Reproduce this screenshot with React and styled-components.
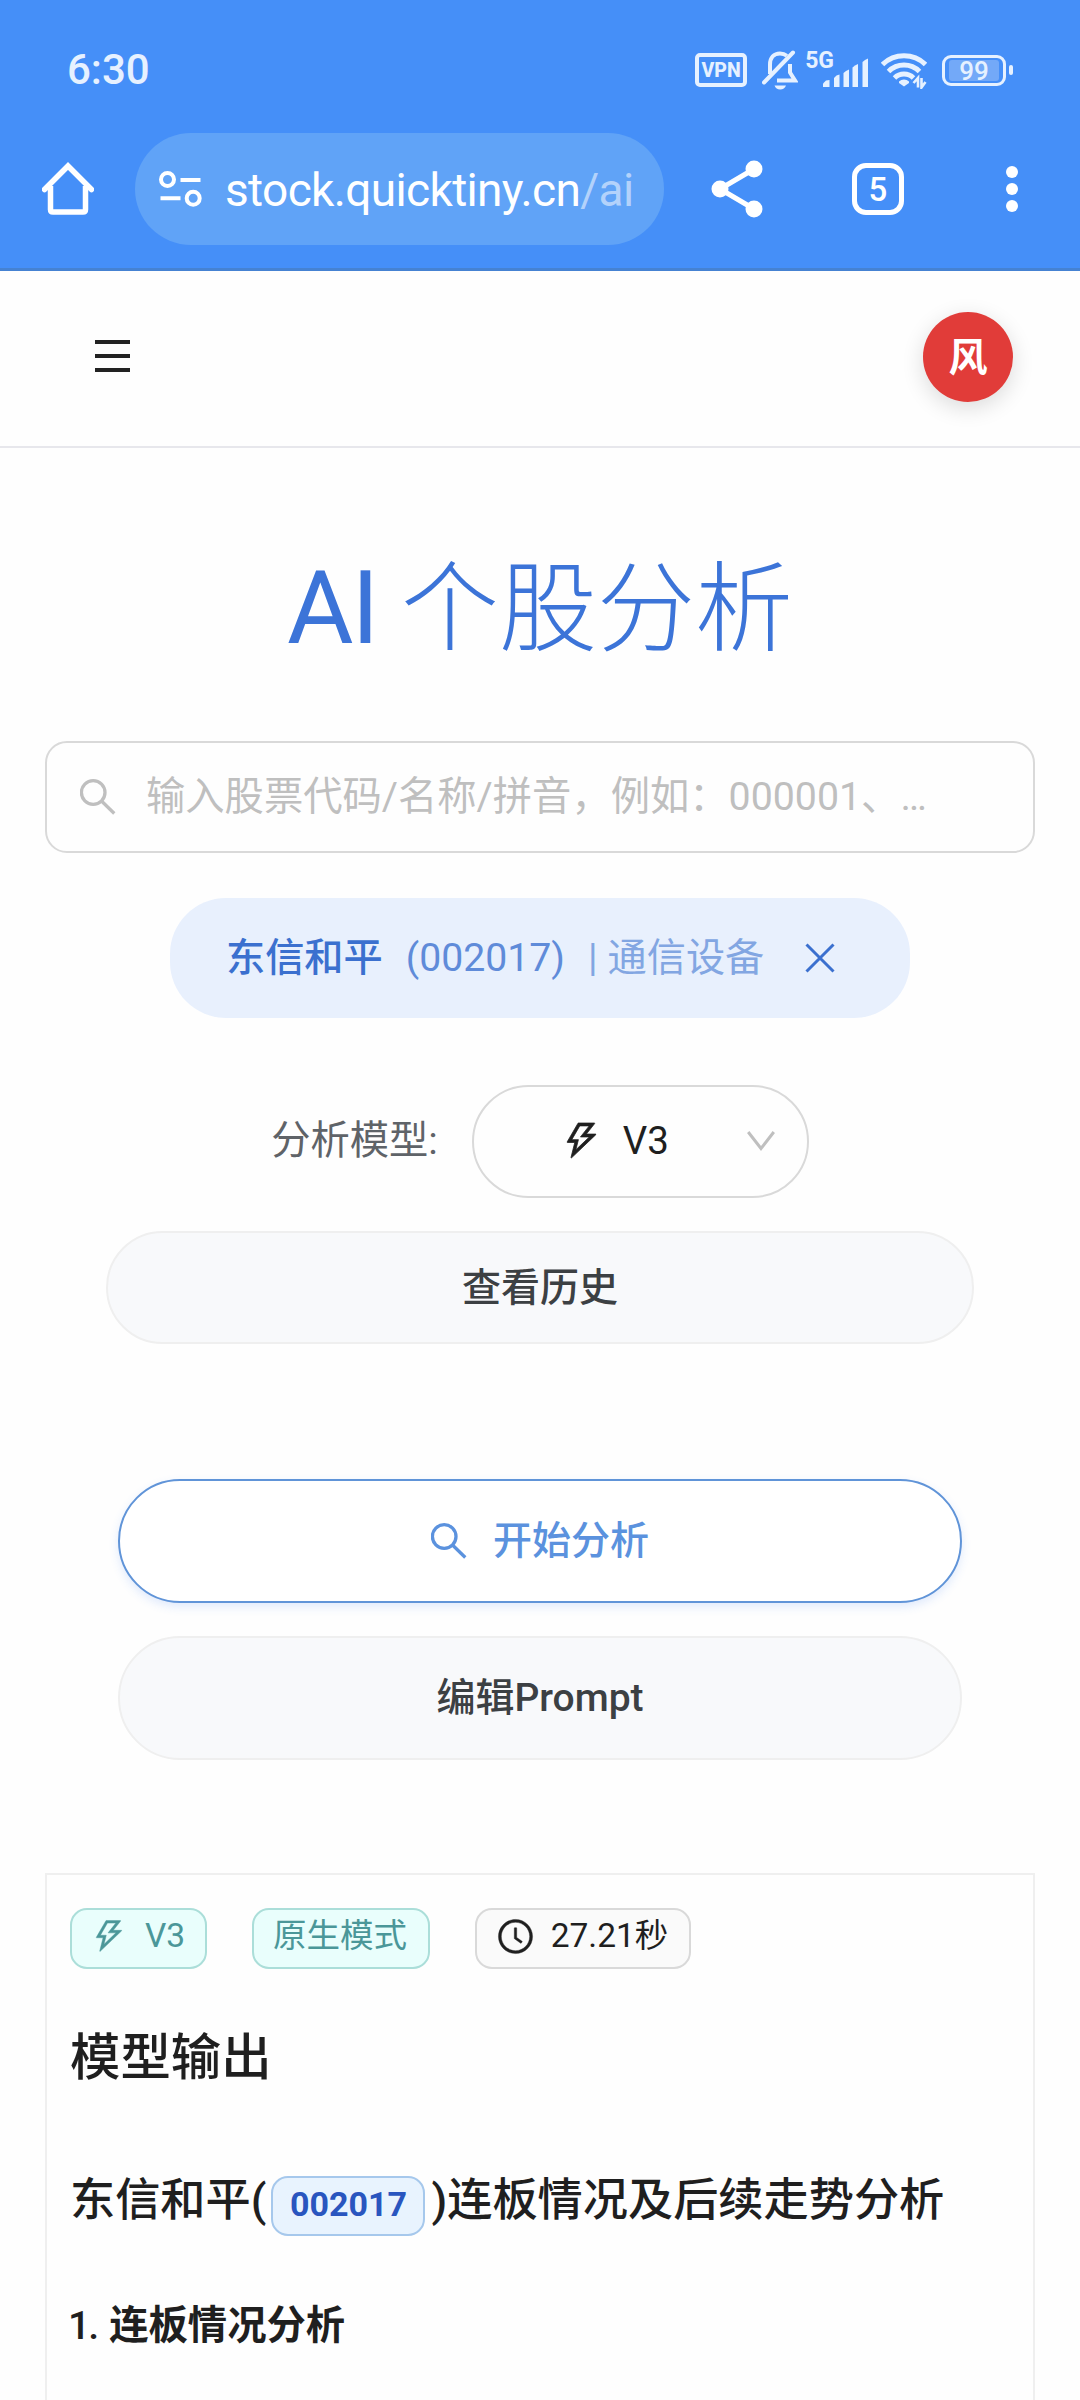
import { useState } from "react";
import styled, { createGlobalStyle } from "styled-components";
import { AiOutlineThunderbolt, AiOutlineClockCircle } from "react-icons/ai";

function App() {
  const [keyword, setKeyword] = useState("");
  return (
    <Page>
      <GlobalStyle />

      <BrowserChrome>
        <StatusBar>
          <Clock>6:30</Clock>
          <StatusIcons>
            <Vpn>VPN</Vpn>
            <BellOff />
            <Network>
              <NetworkType>5G</NetworkType>
              <SignalBars />
            </Network>
            <Wifi />
            <Battery>
              <BatteryBody>
                <BatteryLevel>99</BatteryLevel>
              </BatteryBody>
              <BatteryTip />
            </Battery>
          </StatusIcons>
        </StatusBar>
        <Toolbar>
          <HomeIcon />
          <UrlBar>
            <TuneIcon />
            <Url>
              stock.quicktiny.cn<UrlPath>/ai</UrlPath>
            </Url>
          </UrlBar>
          <ShareIcon />
          <TabCount>5</TabCount>
          <MoreIcon />
        </Toolbar>
      </BrowserChrome>

      <AppBar>
        <MenuButton>
          <i />
          <i />
          <i />
        </MenuButton>
        <Avatar>风</Avatar>
      </AppBar>

      <Main>
        <Title>
          <TitleLatin>AI</TitleLatin> 个股分析
        </Title>

        <SearchBox>
          <SearchIcon />
          <SearchInput
            value={keyword}
            onChange={(e) => setKeyword(e.target.value)}
            placeholder="输入股票代码/名称/拼音，例如：000001、600000"
          />
        </SearchBox>

        <StockPill>
          <StockName>东信和平</StockName>
          <StockCode>(002017)</StockCode>
          <StockIndustry>
            <Bar>|</Bar>通信设备
          </StockIndustry>
          <CloseIcon />
        </StockPill>

        <ModelRow>
          <ModelLabel>分析模型:</ModelLabel>
          <ModelSelect>
            <ModelValue>
              <AiOutlineThunderbolt size={43} strokeWidth={18} />
              V3
            </ModelValue>
            <DownIcon />
          </ModelSelect>
        </ModelRow>

        <Button $width={868} $height={113}>查看历史</Button>

        <Actions>
          <Button $width={844} $height={124} $primary>
            <SearchIcon />
            开始分析
          </Button>
          <Button $width={844} $height={124}>编辑Prompt</Button>
        </Actions>

        <ResultCard>
          <Tags>
            <Tag $width={137} $teal $gap={17}>
              <AiOutlineThunderbolt size={38} strokeWidth={12} />
              V3
            </Tag>
            <Tag $width={178} $teal>原生模式</Tag>
            <Tag $width={216} $gap={16}>
              <AiOutlineClockCircle size={39} strokeWidth={10} />
              27.21秒
            </Tag>
          </Tags>
          <OutputTitle>模型输出</OutputTitle>
          <Heading>
            东信和平(<Code>002017</Code>)连板情况及后续走势分析
          </Heading>
          <Section>
            <SectionNo>1.</SectionNo>连板情况分析
          </Section>
        </ResultCard>
      </Main>
    </Page>
  );
}

export default App;

/* --- icons --- */

const BellOff = () => (
  <svg width="36" height="40" viewBox="0 0 36 40" fill="none" stroke="#e6f1ff" strokeWidth="4">
    <path d="M8 24V14.500C8 7.500 12 3.500 18 3.500c2.800 0 5 .8 6.800 2.300" />
    <path d="M28 14v8.500l5 8H15" />
    <path d="M2 32.500 31 2.500" strokeLinecap="round" strokeWidth="4" />
    <path d="M12.500 35.500h11.500c-1 2.500-3 4-5.800 4s-4.700-1.500-5.700-4z" fill="#e6f1ff" stroke="none" />
  </svg>
);

const SignalBars = () => (
  <svg width="46" height="30" viewBox="0 0 46 30" fill="#e6f1ff">
    <path d="M0 29v-3.500l3-3 3.500-.5v7z" />
    <path d="M11 29V20l2.500-2.500 3-1V29z" />
    <path d="M20.500 29V15l2.500-2 3-1.500V29z" />
    <path d="M29.500 29V9.500l2.500-2 3-1.500V29z" />
    <path d="M39.500 29V4l2.500-2 3-1.500V29z" />
  </svg>
);

const Wifi = () => (
  <svg width="46" height="38" viewBox="0 0 46 38" fill="none" stroke="#e6f1ff" strokeWidth="5">
    <path d="M1.500 13.500a31 31 0 0 1 43 0" />
    <path d="M7.500 20.500a22 22 0 0 1 31 0" />
    <path d="M13.500 27a13.500 13.500 0 0 1 19 0" />
    <path d="M18 30.500a7.500 7.500 0 0 1 10 0v1.500L23 35.500 18 32z" fill="#e6f1ff" stroke="none" />
    <path d="M37 36.500V27l-4.500 5M40.500 27v9.500l4-5.500" strokeWidth="2.600" />
  </svg>
);

const HomeIcon = () => (
  <svg width="52" height="54" viewBox="0 0 52 54" fill="none" stroke="#fff" strokeWidth="5.500">
    <path d="M2.500 27.500 26 4l23.500 23.500" strokeLinecap="round" />
    <path d="M8.500 24v23.500q0 2.500 2.500 2.500h30q2.500 0 2.500-2.500V24" />
  </svg>
);

const TuneIcon = () => (
  <svg width="43" height="36" viewBox="0 0 43 36" fill="none" stroke="#fff" strokeWidth="4">
    <circle cx="8.500" cy="8.500" r="6.500" />
    <path d="M21.500 9H41.500M1.500 27.200h20" />
    <circle cx="34.200" cy="27.200" r="6.500" />
  </svg>
);

const ShareIcon = () => (
  <svg width="52" height="58" viewBox="0 0 52 58" fill="#fff">
    <path d="M43 9 9 29l34 20" fill="none" stroke="#fff" strokeWidth="5" />
    <circle cx="43" cy="9" r="8.500" />
    <circle cx="9" cy="29" r="8.500" />
    <circle cx="43" cy="49" r="8.500" />
  </svg>
);

const MoreIcon = () => (
  <svg width="12" height="46" viewBox="0 0 12 46" fill="#fff">
    <circle cx="6" cy="6" r="6" />
    <circle cx="6" cy="23" r="6" />
    <circle cx="6" cy="40" r="6" />
  </svg>
);

const SearchIcon = () => (
  <svg width="36" height="36" viewBox="0 0 36 36" fill="none" stroke="currentColor" strokeWidth="3.300">
    <circle cx="13.200" cy="13.500" r="11.800" />
    <path d="M21.500 22 34.300 34.500" />
  </svg>
);

const DownIcon = () => (
  <svg width="28" height="20" viewBox="0 0 28 20" fill="none" stroke="#bfbfbf" strokeWidth="3">
    <path d="M1.200 1 14 17.500 26.800 1" />
  </svg>
);

const CloseIcon = () => (
  <svg width="30" height="30" viewBox="0 0 30 30" fill="none" stroke="#3b70cf" strokeWidth="3">
    <path d="M1.500 1.500l27 27M28.500 1.500l-27 27" />
  </svg>
);

/* --- styled-components --- */

const GlobalStyle = createGlobalStyle`
  * {
    box-sizing: border-box;
  }
  body {
    margin: 0;
    background: #fefefe;
    font-family: Roboto, "Noto Sans CJK SC", sans-serif;
  }
  svg {
    flex-shrink: 0;
  }
`;

const Page = styled.div`
  width: 1080px;
  height: 2400px;
  overflow: hidden;
  display: flex;
  flex-direction: column;
`;

const BrowserChrome = styled.header`
  height: 271px;
  flex-shrink: 0;
  background: #458ff8;
  border-bottom: 3px solid #4582d2;
`;

const StatusBar = styled.div`
  height: 133px;
  display: flex;
  justify-content: space-between;
  align-items: center;
  padding: 7px 67px 0 67px;
  color: #e6f1ff;
`;

const Clock = styled.span`
  font-size: 42px;
  font-weight: 500;
  line-height: 50px;
`;

const StatusIcons = styled.div`
  display: flex;
  align-items: center;
  height: 40px;
`;

const Vpn = styled.span`
  width: 52px;
  height: 34px;
  margin-right: 15px;
  border: 4px solid #e6f1ff;
  border-radius: 5px;
  font-size: 19.500px;
  font-weight: 800;
  line-height: 27px;
  text-align: center;
`;

const Network = styled.div`
  height: 36px;
  margin: 0 12px 0 7px;
  display: flex;
  align-items: flex-end;
  svg {
    margin-left: -11px;
  }
`;

const NetworkType = styled.span`
  align-self: flex-start;
  font-size: 23px;
  font-weight: 700;
  line-height: 18px;
`;

const Battery = styled.div`
  display: flex;
  align-items: center;
  gap: 3px;
  margin-left: 15px;
`;

const BatteryBody = styled.div`
  width: 64px;
  height: 31px;
  padding: 2px;
  border: 3px solid #e6f1ff;
  border-radius: 9px;
`;

const BatteryLevel = styled.div`
  height: 21px;
  margin: 0 2px;
  border-radius: 3px;
  background: #73a9f8;
  font-size: 26px;
  font-weight: 500;
  line-height: 22px;
  text-align: center;
`;

const BatteryTip = styled.i`
  width: 4px;
  height: 10px;
  border-radius: 2px;
  background: #e6f1ff;
`;

const Toolbar = styled.div`
  height: 112px;
  display: flex;
  align-items: center;
  padding: 0 62px 0 42px;
`;

const UrlBar = styled.div`
  width: 529px;
  height: 112px;
  margin: 0 47px 0 41px;
  padding-left: 24px;
  display: flex;
  align-items: center;
  border-radius: 56px;
  background: #60a3f7;
`;

const Url = styled.span`
  margin: 2px 0 0 23px;
  color: #fff;
  font-size: 46px;
  letter-spacing: -0.640px;
  line-height: 56px;
  white-space: nowrap;
`;

const UrlPath = styled.span`
  color: #b3d2fb;
`;

const TabCount = styled.div`
  width: 52px;
  height: 52px;
  margin: 0 102px 0 89px;
  border: 5.5px solid #fff;
  border-radius: 14px;
  color: #fff;
  font-size: 33px;
  font-weight: 500;
  line-height: 43px;
  text-align: center;
`;

const AppBar = styled.div`
  height: 177px;
  flex-shrink: 0;
  display: flex;
  justify-content: space-between;
  align-items: flex-start;
  padding: 41px 67px 0 95px;
  border-bottom: 2px solid #e7e7ec;
`;

const MenuButton = styled.div`
  width: 35px;
  margin-top: 28px;
  display: flex;
  flex-direction: column;
  gap: 10px;
  i {
    height: 4px;
    background: #222;
  }
`;

const Avatar = styled.div`
  width: 90px;
  height: 90px;
  border-radius: 50%;
  background: #e13c39;
  box-shadow: 0 6px 22px rgba(0, 0, 0, 0.14);
  color: #fff;
  font-size: 39px;
  font-weight: 600;
  line-height: 92px;
  text-align: center;
`;

const Main = styled.main`
  flex: 1;
  padding: 0 45px;
  display: flex;
  flex-direction: column;
  align-items: center;
`;

const Title = styled.h1`
  margin: 100px 0 73px;
  height: 120px;
  color: #3c74d8;
  font-size: 98px;
  font-weight: 300;
  line-height: 120px;
  white-space: nowrap;
`;

const TitleLatin = styled.span`
  font-size: 102px;
  font-weight: 400;
  letter-spacing: -2px;
`;

const SearchBox = styled.div`
  width: 990px;
  height: 112px;
  flex-shrink: 0;
  padding: 0 33px;
  display: flex;
  align-items: center;
  gap: 30px;
  border: 2px solid #d9d9d9;
  border-radius: 22px;
  color: #bfbfbf;
`;

const SearchInput = styled.input`
  width: 790px;
  padding: 0;
  border: none;
  outline: none;
  background: transparent;
  color: #222;
  font-family: inherit;
  font-size: 39.300px;
  line-height: 56px;
  text-overflow: ellipsis;
  &::placeholder {
    color: #bfbfbf;
  }
`;

const StockPill = styled.div`
  width: 740px;
  height: 120px;
  flex-shrink: 0;
  margin-top: 45px;
  padding-left: 56px;
  display: flex;
  align-items: center;
  border-radius: 56px;
  background: #e8f0fd;
  font-size: 39.200px;
  line-height: 56px;
  svg {
    margin-left: 41px;
  }
`;

const StockName = styled.span`
  color: #3b70cf;
  font-weight: 500;
`;

const StockCode = styled.span`
  margin-left: 23px;
  color: #5f8bd9;
`;

const StockIndustry = styled.span`
  margin-left: 23px;
  color: #82a6e2;
`;

const Bar = styled.span`
  margin-right: 10px;
`;

const ModelRow = styled.div`
  margin: 67px 0 33px;
  display: flex;
  align-items: center;
  gap: 34px;
`;

const ModelLabel = styled.span`
  padding-bottom: 2px;
  color: #5f6368;
  font-size: 39.300px;
  line-height: 56px;
`;

const ModelSelect = styled.div`
  width: 337px;
  height: 113px;
  padding: 0 32px 2px 86px;
  display: flex;
  align-items: center;
  justify-content: space-between;
  border: 2px solid #d9d9d9;
  border-radius: 57px;
`;

const ModelValue = styled.span`
  display: flex;
  align-items: center;
  gap: 20px;
  color: #1f1f1f;
  font-size: 38.500px;
  line-height: 54px;
`;

const Button = styled.button`
  width: ${(props) => props.$width}px;
  height: ${(props) => props.$height}px;
  flex-shrink: 0;
  padding: 0;
  display: flex;
  align-items: center;
  justify-content: center;
  border-radius: 62px;
  font-family: inherit;
  font-size: 39px;
  font-weight: 500;
  line-height: 56px;
  cursor: pointer;
  ${(props) =>
    props.$primary
      ? `gap: 26px; background: #fff; color: #5b92de; border: 2px solid #6094d8; box-shadow: 0 4px 10px rgba(66, 133, 244, 0.16);`
      : `background: #f8f9fb; color: #3c4043; border: 2px solid #efefef;`}
`;

const Actions = styled.div`
  margin: 135px 0 113px;
  display: flex;
  flex-direction: column;
  gap: 33px;
`;

const ResultCard = styled.section`
  width: 990px;
  flex: 1;
  padding: 33px 23px 0;
  border: 2px solid #efefef;
  border-bottom: none;
  color: #1f1f1f;
`;

const Tags = styled.div`
  display: flex;
  gap: 45px;
`;

const Tag = styled.span`
  width: ${(props) => props.$width}px;
  height: 61px;
  padding: 0 2px 5px 0;
  display: flex;
  align-items: center;
  justify-content: center;
  gap: ${(props) => props.$gap || 0}px;
  border-radius: 17px;
  font-size: 33.500px;
  line-height: 48px;
  ${(props) =>
    props.$teal
      ? `background: #e9fefc; color: #4b9799; border: 2px solid #abded9;`
      : `background: #fafafa; color: #1f1f1f; border: 2px solid #d9d9d9;`}
`;

const OutputTitle = styled.h3`
  margin: 54px 0 0;
  font-size: 50.400px;
  font-weight: 500;
  line-height: 70px;
`;

const Heading = styled.h4`
  margin: 76px 0 0;
  height: 64px;
  font-size: 45.200px;
  font-weight: 500;
  line-height: 64px;
  white-space: nowrap;
`;

const Code = styled.code`
  display: inline-block;
  width: 154px;
  height: 60px;
  margin: 0 6px 0 5px;
  border: 2px solid #a6c8ec;
  border-radius: 17px;
  background: #e8f3fe;
  color: #2955bf;
  font-family: Roboto, sans-serif;
  font-size: 34px;
  font-weight: 700;
  line-height: 52px;
  text-align: center;
`;

const Section = styled.p`
  margin: 65px 0 0;
  font-size: 39.300px;
  font-weight: 700;
  line-height: 56px;
`;

const SectionNo = styled.span`
  margin: 0 12px 0 -2px;
  font-weight: 500;
  letter-spacing: -2px;
`;
